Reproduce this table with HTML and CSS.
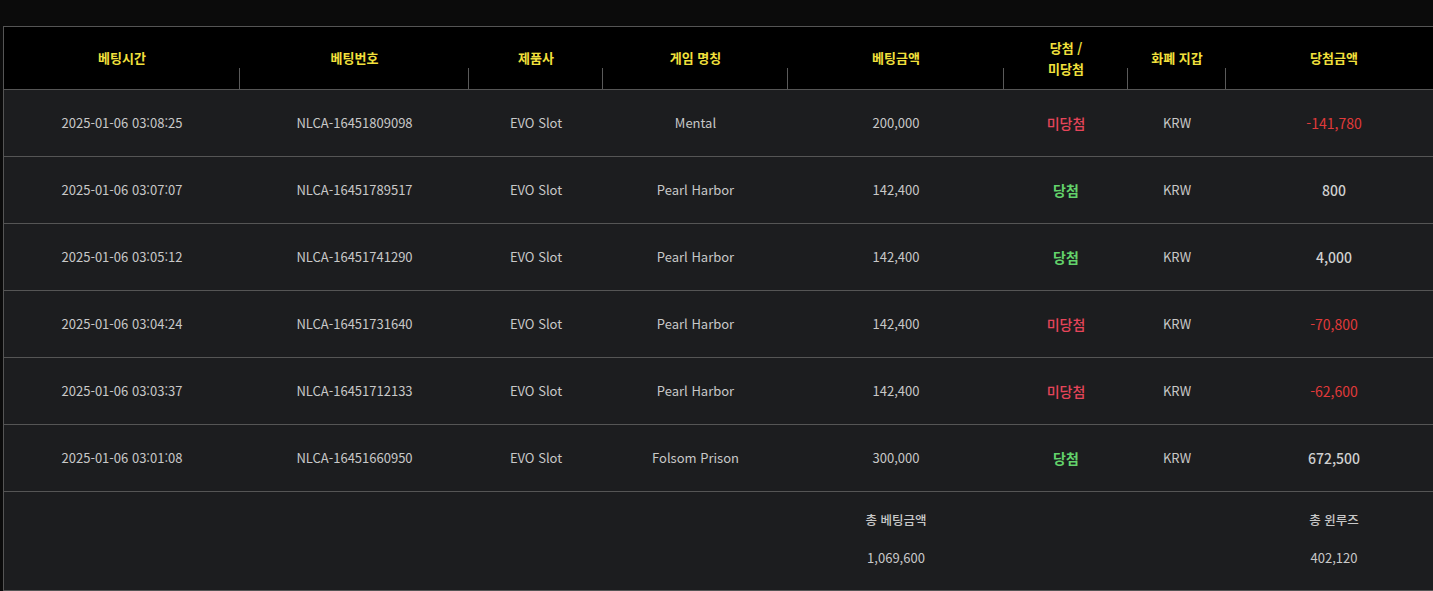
FILE: index.html
```html
<!DOCTYPE html>
<html lang="ko">
<head>
<meta charset="utf-8">
<title>베팅 내역</title>
<link rel="stylesheet" href="styles.css">
</head>
<body>
<div class="page">
  <table class="bets">
    <colgroup>
      <col class="c1"><col class="c2"><col class="c3"><col class="c4"><col class="c5"><col class="c6"><col class="c7"><col class="c8">
    </colgroup>
    <thead>
      <tr>
        <th>베팅시간</th>
        <th>베팅번호</th>
        <th>제품사</th>
        <th>게임 명칭</th>
        <th>베팅금액</th>
        <th>당첨 /<br>미당첨</th>
        <th>화폐 지갑</th>
        <th class="last">당첨금액</th>
      </tr>
    </thead>
    <tbody>
      <tr>
        <td>2025-01-06 03:08:25</td><td>NLCA-16451809098</td><td>EVO Slot</td><td>Mental</td><td>200,000</td>
        <td class="lose">미당첨</td><td>KRW</td><td class="amt neg">-141,780</td>
      </tr>
      <tr>
        <td>2025-01-06 03:07:07</td><td>NLCA-16451789517</td><td>EVO Slot</td><td>Pearl Harbor</td><td>142,400</td>
        <td class="win">당첨</td><td>KRW</td><td class="amt">800</td>
      </tr>
      <tr>
        <td>2025-01-06 03:05:12</td><td>NLCA-16451741290</td><td>EVO Slot</td><td>Pearl Harbor</td><td>142,400</td>
        <td class="win">당첨</td><td>KRW</td><td class="amt">4,000</td>
      </tr>
      <tr>
        <td>2025-01-06 03:04:24</td><td>NLCA-16451731640</td><td>EVO Slot</td><td>Pearl Harbor</td><td>142,400</td>
        <td class="lose">미당첨</td><td>KRW</td><td class="amt neg">-70,800</td>
      </tr>
      <tr>
        <td>2025-01-06 03:03:37</td><td>NLCA-16451712133</td><td>EVO Slot</td><td>Pearl Harbor</td><td>142,400</td>
        <td class="lose">미당첨</td><td>KRW</td><td class="amt neg">-62,600</td>
      </tr>
      <tr>
        <td>2025-01-06 03:01:08</td><td>NLCA-16451660950</td><td>EVO Slot</td><td>Folsom Prison</td><td>300,000</td>
        <td class="win">당첨</td><td>KRW</td><td class="amt">672,500</td>
      </tr>
    </tbody>
    <tfoot>
      <tr>
        <td></td><td></td><td></td><td></td>
        <td><div class="sum"><span>총 베팅금액</span><span>1,069,600</span></div></td>
        <td></td><td></td>
        <td><div class="sum"><span>총 윈루즈</span><span>402,120</span></div></td>
      </tr>
    </tfoot>
  </table>
</div>
</body>
</html>
```

FILE: styles.css
```css
html, body {
  margin: 0;
  padding: 0;
  background: #0b0b0b;
  overflow: hidden;
}
body {
  font-family: "Noto Sans CJK KR", "Noto Sans", sans-serif;
  color: #c6c6c6;
}
.page {
  padding: 26px 0 0 3px;
  width: 1500px;
}
.bets {
  border-collapse: separate;
  border-spacing: 0;
  table-layout: fixed;
  border: 1px solid #555;
  border-right: none;
  background: #1c1d1f;
}
.c1 { width: 236px; }
.c2 { width: 229px; }
.c3 { width: 134px; }
.c4 { width: 185px; }
.c5 { width: 216px; }
.c6 { width: 124px; }
.c7 { width: 98px; }
.c8 { width: 216px; }

.bets th {
  position: relative;
  background: #000;
  color: #f2e03c;
  font-size: 13px;
  font-weight: 700;
  line-height: 21px;
  height: 63px;
  padding: 0 0 1px;
  text-align: center;
  vertical-align: middle;
  border-bottom: 1px solid #555;
  box-sizing: border-box;
}
.bets th::after {
  content: "";
  position: absolute;
  right: 0;
  bottom: 0;
  width: 1px;
  height: 21px;
  background: #5a5a5a;
}
.bets th.last::after { display: none; }

.bets tbody td {
  height: 67px;
  box-sizing: border-box;
  padding: 0 0 1px;
  text-align: center;
  vertical-align: middle;
  font-size: 13px;
  line-height: 20px;
  color: #c8c8c8;
  border-bottom: 1px solid #555;
}
.bets tbody td.win {
  color: #63d36b;
  font-size: 14px;
  font-weight: 700;
}
.bets tbody td.lose {
  color: #e6455a;
  font-size: 14px;
  font-weight: 500;
}
.bets tbody td.amt {
  font-size: 14px;
  font-weight: 500;
  color: #cfcfcf;
}
.bets tbody td.amt.neg {
  color: #e03a3a;
  font-weight: 400;
}

.bets tfoot td {
  padding: 0;
  height: 98px;
  vertical-align: top;
  text-align: center;
}
.sum {
  display: flex;
  flex-direction: column;
  align-items: center;
  gap: 18px;
  padding-top: 18px;
  font-size: 13px;
  line-height: 20px;
  color: #c9c9c9;
}
.sum span:first-child { font-weight: 500; font-size: 12.5px; }
```
